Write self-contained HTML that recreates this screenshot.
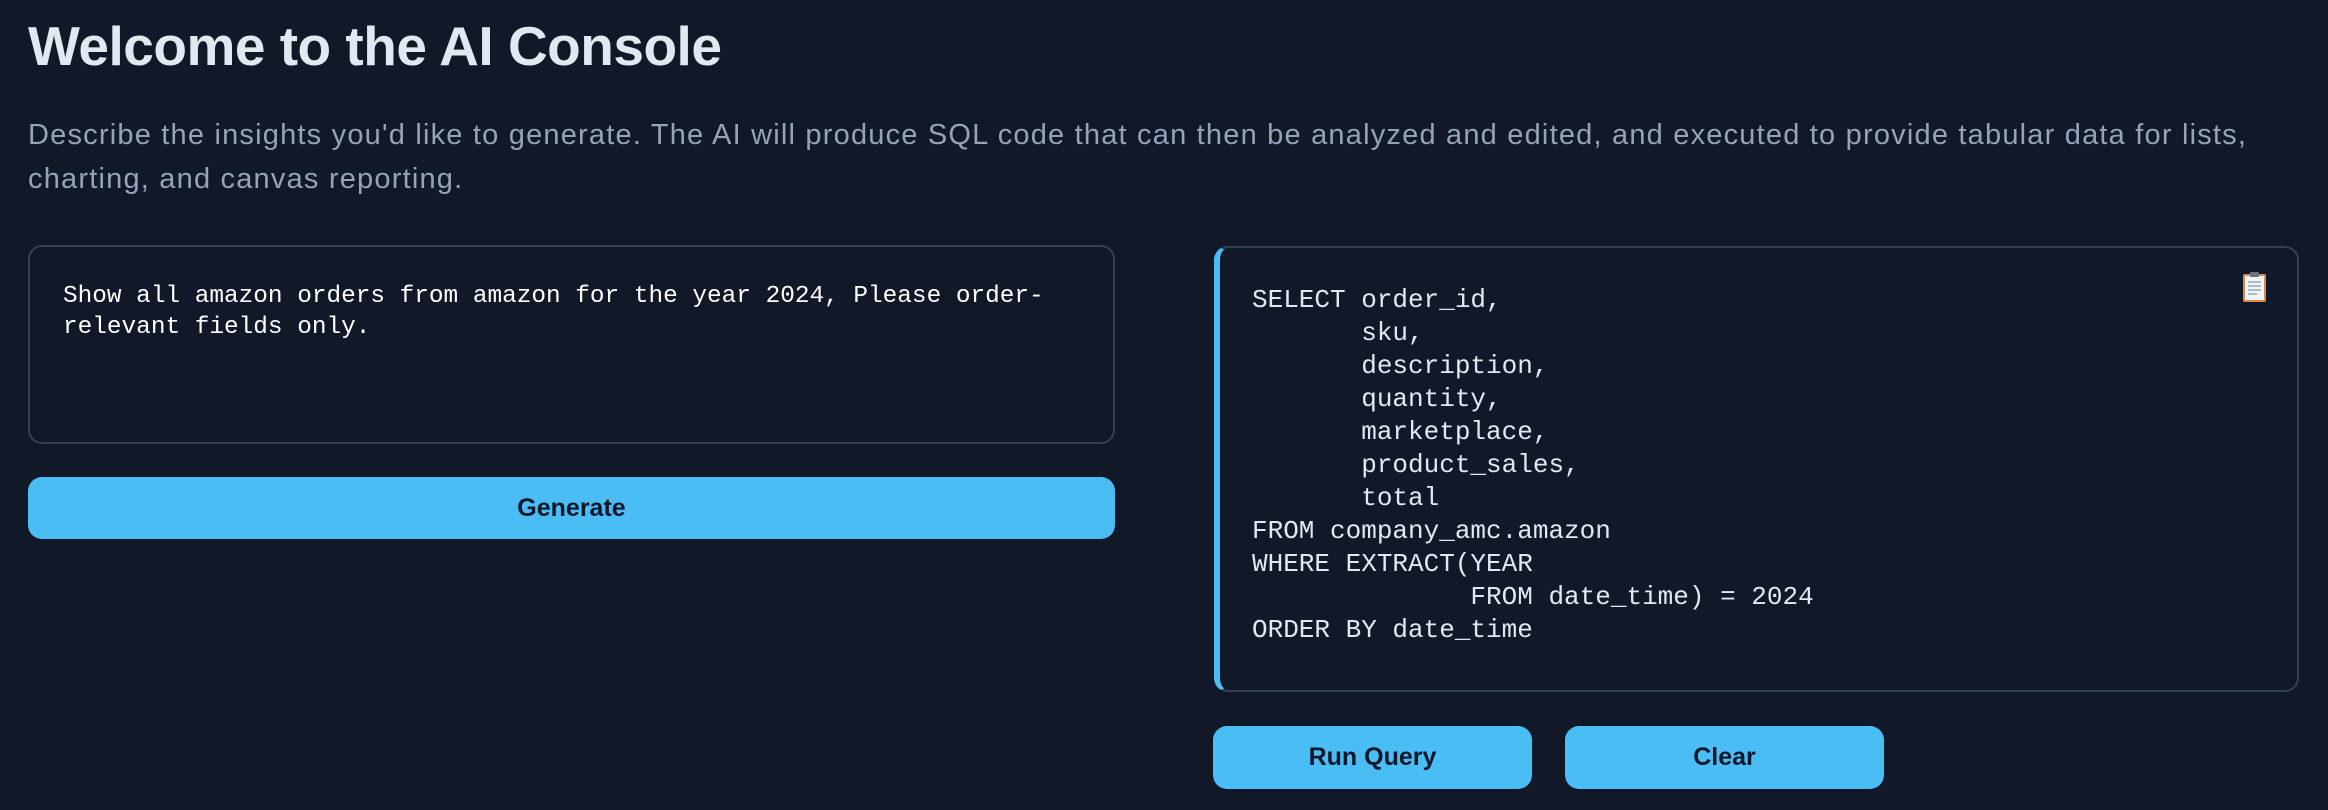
<!DOCTYPE html>
<html><head><meta charset="utf-8"><style>
*{box-sizing:border-box;margin:0;padding:0}
body{width:2328px;height:810px;background:#111827;font-family:"Liberation Sans",sans-serif;position:relative;overflow:hidden}
h1{position:absolute;left:28px;top:14px;font-size:55px;font-weight:bold;color:#e2e8f0;letter-spacing:-0.5px}
p.d{position:absolute;left:28px;top:113px;width:2295px;font-size:29px;line-height:44px;color:#94a3b8;letter-spacing:1.2px}
.ta{position:absolute;left:28px;top:245px;width:1087px;height:199px;border:2px solid #334155;border-radius:14px;padding:34px 0 0 33px;font-family:"Liberation Mono",monospace;font-size:24.4px;line-height:31px;color:#fff;white-space:pre}
.btn{position:absolute;background:#4abdf5;border-radius:14px;color:#0f172a;font-weight:bold;font-size:25px;display:flex;align-items:center;justify-content:center}
.code{position:absolute;left:1214px;top:246px;width:1085px;height:446px;border:2px solid #334155;border-left:6px solid #4abdf5;border-radius:14px;padding:36px 0 0 32px;font-family:"Liberation Mono",monospace;font-size:26px;line-height:33px;color:#e2e8f0;white-space:pre}
</style></head><body>
<h1>Welcome to the AI Console</h1>
<p class="d">Describe the insights you'd like to generate. The AI will produce SQL code that can then be analyzed and edited, and executed to provide tabular data for lists,<br>charting, and canvas reporting.</p>
<div class="ta">Show all amazon orders from amazon for the year 2024, Please order-
relevant fields only.</div>
<div class="btn" style="left:28px;top:477px;width:1087px;height:62px">Generate</div>
<div class="code">SELECT order_id,
       sku,
       description,
       quantity,
       marketplace,
       product_sales,
       total
FROM company_amc.amazon
WHERE EXTRACT(YEAR
              FROM date_time) = 2024
ORDER BY date_time</div>
<svg style="position:absolute;left:2242px;top:271px" width="25" height="32" viewBox="0 0 25 32">
<rect x="1" y="3" width="23" height="28" rx="2" fill="#d98c4a"/>
<rect x="3" y="5" width="19" height="24" fill="#f1f5f9"/>
<rect x="8" y="1" width="9" height="5" rx="1" fill="#6b7280"/>
<path d="M6 11h13M6 15h13M6 19h13M6 23h9" stroke="#94a3b8" stroke-width="1.5"/>
</svg>
<div class="btn" style="left:1213px;top:726px;width:319px;height:63px">Run Query</div>
<div class="btn" style="left:1565px;top:726px;width:319px;height:63px">Clear</div>
</body></html>
